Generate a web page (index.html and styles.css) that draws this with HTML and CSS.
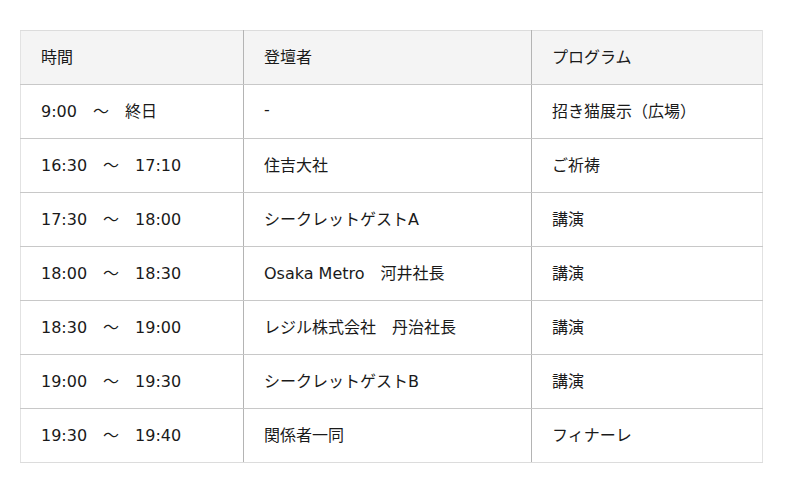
FILE: index.html
```html
<!DOCTYPE html>
<html lang="ja">
<head>
<meta charset="utf-8">
<link rel="stylesheet" href="styles.css">
</head>
<body>
<table class="schedule">
  <colgroup>
    <col class="c1"><col class="c2"><col class="c3">
  </colgroup>
  <thead>
    <tr><th>時間</th><th>登壇者</th><th>プログラム</th></tr>
  </thead>
  <tbody>
    <tr><td>9:00　～　終日</td><td>-</td><td>招き猫展示（広場）</td></tr>
    <tr><td>16:30　～　17:10</td><td>住吉大社</td><td>ご祈祷</td></tr>
    <tr><td>17:30　～　18:00</td><td>シークレットゲストA</td><td>講演</td></tr>
    <tr><td>18:00　～　18:30</td><td>Osaka Metro　河井社長</td><td>講演</td></tr>
    <tr><td>18:30　～　19:00</td><td>レジル株式会社　丹治社長</td><td>講演</td></tr>
    <tr><td>19:00　～　19:30</td><td>シークレットゲストB</td><td>講演</td></tr>
    <tr><td>19:30　～　19:40</td><td>関係者一同</td><td>フィナーレ</td></tr>
  </tbody>
</table>
</body>
</html>
```
FILE: styles.css
```css
html, body {
  margin: 0;
  padding: 0;
  background: #fff;
}
body {
  padding: 30px 0 0 20px;
  font-family: "DejaVu Sans", "Noto Sans CJK JP", sans-serif;
  font-size: 16px;
  color: #1a1a1a;
}
.schedule {
  width: 742px;
  border-collapse: collapse;
  table-layout: fixed;
}
.c1 { width: 223px; }
.c2 { width: 288px; }
.c3 { width: 231px; }
.schedule tr {
  height: 54px;
}
.schedule th,
.schedule td {
  padding: 0 20px 4px;
  text-align: left;
  font-weight: normal;
  vertical-align: middle;
  border-top: 1px solid #c8c8c8;
  border-bottom: 1px solid #c8c8c8;
  border-left: 1px solid #b4b4b4;
  border-right: 1px solid #b4b4b4;
}
.schedule th:first-child,
.schedule td:first-child {
  border-left-color: #e2e2e2;
}
.schedule th:last-child,
.schedule td:last-child {
  border-right-color: #e2e2e2;
}
.schedule thead th {
  background: #f4f4f4;
  border-top-color: #dcdcdc;
}
.schedule tbody tr:last-child td {
  border-bottom-color: #dcdcdc;
}
```
